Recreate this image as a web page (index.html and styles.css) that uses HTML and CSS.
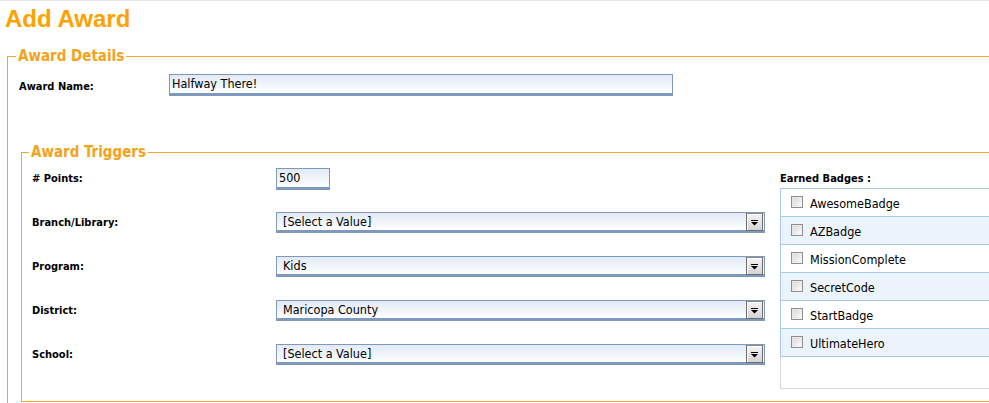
FILE: index.html
```html
<!DOCTYPE html>
<html>
<head>
<meta charset="utf-8">
<link rel="stylesheet" href="styles.css">
</head>
<body>
<h1 class="title">Add Award</h1>
<fieldset class="fs fs-outer">
  <legend class="lg">Award Details</legend>
  <div class="name-row">
    <label class="lbl name-lbl">Award Name:</label>
    <div class="inp name-inp">Halfway There!</div>
  </div>
  <fieldset class="fs fs-inner">
    <legend class="lg">Award Triggers</legend>
    <div class="trig">
      <div class="form">
        <div class="frow">
          <label class="lbl"># Points:</label>
          <div class="inp pts-inp">500</div>
        </div>
        <div class="frow">
          <label class="lbl">Branch/Library:</label>
          <div class="sel"><span class="sel-txt">[Select a Value]</span><span class="sel-btn"><svg width="9" height="6" viewBox="0 0 9 6"><rect x="1" y="0" width="7" height="1" fill="#000"/><path d="M1 2H8L4.5 5.5Z" fill="#000"/></svg></span></div>
        </div>
        <div class="frow">
          <label class="lbl">Program:</label>
          <div class="sel"><span class="sel-txt">Kids</span><span class="sel-btn"><svg width="9" height="6" viewBox="0 0 9 6"><rect x="1" y="0" width="7" height="1" fill="#000"/><path d="M1 2H8L4.5 5.5Z" fill="#000"/></svg></span></div>
        </div>
        <div class="frow">
          <label class="lbl">District:</label>
          <div class="sel"><span class="sel-txt">Maricopa County</span><span class="sel-btn"><svg width="9" height="6" viewBox="0 0 9 6"><rect x="1" y="0" width="7" height="1" fill="#000"/><path d="M1 2H8L4.5 5.5Z" fill="#000"/></svg></span></div>
        </div>
        <div class="frow">
          <label class="lbl">School:</label>
          <div class="sel"><span class="sel-txt">[Select a Value]</span><span class="sel-btn"><svg width="9" height="6" viewBox="0 0 9 6"><rect x="1" y="0" width="7" height="1" fill="#000"/><path d="M1 2H8L4.5 5.5Z" fill="#000"/></svg></span></div>
        </div>
      </div>
      <div class="badges">
        <div class="lbl badges-lbl">Earned Badges :</div>
        <div class="blist">
          <div class="brow"><span class="cb"></span>AwesomeBadge</div>
          <div class="brow alt"><span class="cb"></span>AZBadge</div>
          <div class="brow"><span class="cb"></span>MissionComplete</div>
          <div class="brow alt"><span class="cb"></span>SecretCode</div>
          <div class="brow"><span class="cb"></span>StartBadge</div>
          <div class="brow alt last"><span class="cb"></span>UltimateHero</div>
        </div>
      </div>
    </div>
  </fieldset>
</fieldset>
</body>
</html>
```
FILE: styles.css
```css
html, body {
  margin: 0;
  padding: 0;
  background: #fff;
  overflow: hidden;
}
body {
  border-top: 1px solid #e6e6e6;
  font-family: "DejaVu Sans Condensed", "DejaVu Sans", sans-serif;
  font-size: 12px;
  color: #000;
}
.title {
  margin: 0;
  padding: 4px 0 0 5px;
  height: 29px;
  font-family: "Liberation Sans", Arial, sans-serif;
  font-weight: bold;
  font-size: 24px;
  line-height: 28px;
  color: #ffa200;
}
.fs {
  border: 1px solid #f0a630;
  border-right: none;
  margin: 0;
  padding: 0;
  min-width: 0;
}
.fs-outer {
  margin: 14px 0 0 7px;
  padding: 0 0 0 11px;
  border-bottom: none;
  height: 360px;
}
.lg {
  font-weight: bold;
  font-size: 15px;
  color: #f5a21a;
  padding: 0 2px;
  line-height: 16px;
}
.fs-outer > .lg { margin-left: -3px; }
.lbl {
  font-weight: bold;
  font-size: 11px;
  line-height: 13px;
}
.name-row {
  display: flex;
  align-items: flex-start;
  margin-top: 10px;
}
.name-lbl {
  width: 150px;
  padding-top: 6px;
}
.inp {
  box-sizing: border-box;
  border: 1px solid #7f99bd;
  border-bottom-width: 3px;
  background: linear-gradient(#e2eaf6, #fdfeff);
  font-size: 12.5px;
  line-height: 17px;
  height: 22px;
  padding-left: 2px;
}
.name-inp { width: 504px; }
.fs-inner {
  margin: 48px 0 0 2px;
  padding: 0 0 0 10px;
  height: 256px;
}
.fs-inner > .lg { margin-left: -3px; }
.trig {
  display: flex;
}
.form {
  flex: none;
  width: 733px;
  padding-top: 8px;
  display: flex;
  flex-direction: column;
  gap: 22px;
}
.frow {
  display: flex;
  align-items: flex-start;
  height: 22px;
}
.frow .lbl {
  width: 244px;
  padding-top: 4px;
  flex: none;
}
.pts-inp { width: 54px; }
.sel {
  box-sizing: border-box;
  width: 489px;
  height: 21px;
  border: 1px solid #7f99bd;
  border-bottom-width: 3px;
  background: linear-gradient(#e2eaf6, #fdfeff);
  display: flex;
  align-items: flex-start;
  flex: none;
}
.sel-txt {
  flex: 1;
  padding-left: 6px;
  font-size: 12.5px;
  line-height: 17px;
}
.sel-btn {
  box-sizing: border-box;
  width: 17px;
  height: 18px;
  margin-right: 1px;
  border: 1px solid #6e6e6e;
  border-top-color: #8a8a8a;
  background: linear-gradient(#f4f4f4, #d4d4d4);
  box-shadow: inset 1px 1px 0 #fff;
  display: flex;
  align-items: center;
  justify-content: center;
}
.sel-btn svg { display: block; margin-top: 1px; }
.badges {
  margin-left: 15px;
  padding-top: 12px;
  flex: 1;
}
.blist {
  box-sizing: border-box;
  margin-top: 3px;
  height: 201px;
  border-left: 1px solid #d8d8d8;
  border-bottom: 1px solid #d8d8d8;
}
.brow {
  box-sizing: border-box;
  height: 28px;
  border-top: 1px solid #a9c8ee;
  border-left: 1px solid #a9c8ee;
  margin-left: -1px;
  display: flex;
  align-items: center;
  padding-left: 10px;
  font-size: 12.5px;
  gap: 7px;
  padding-top: 2px;
}
.brow.alt { background: #ebf3fd; }
.brow.last { border-bottom: 1px solid #a9c8ee; height: 29px; }
.cb {
  box-sizing: border-box;
  width: 12px;
  height: 12px;
  border: 1px solid #8f8f8f;
  background: linear-gradient(135deg, #d8d8d8, #fbfbfb);
  box-shadow: inset 1px 1px 0 #e8e8e8;
  margin-top: -4px;
}
```
